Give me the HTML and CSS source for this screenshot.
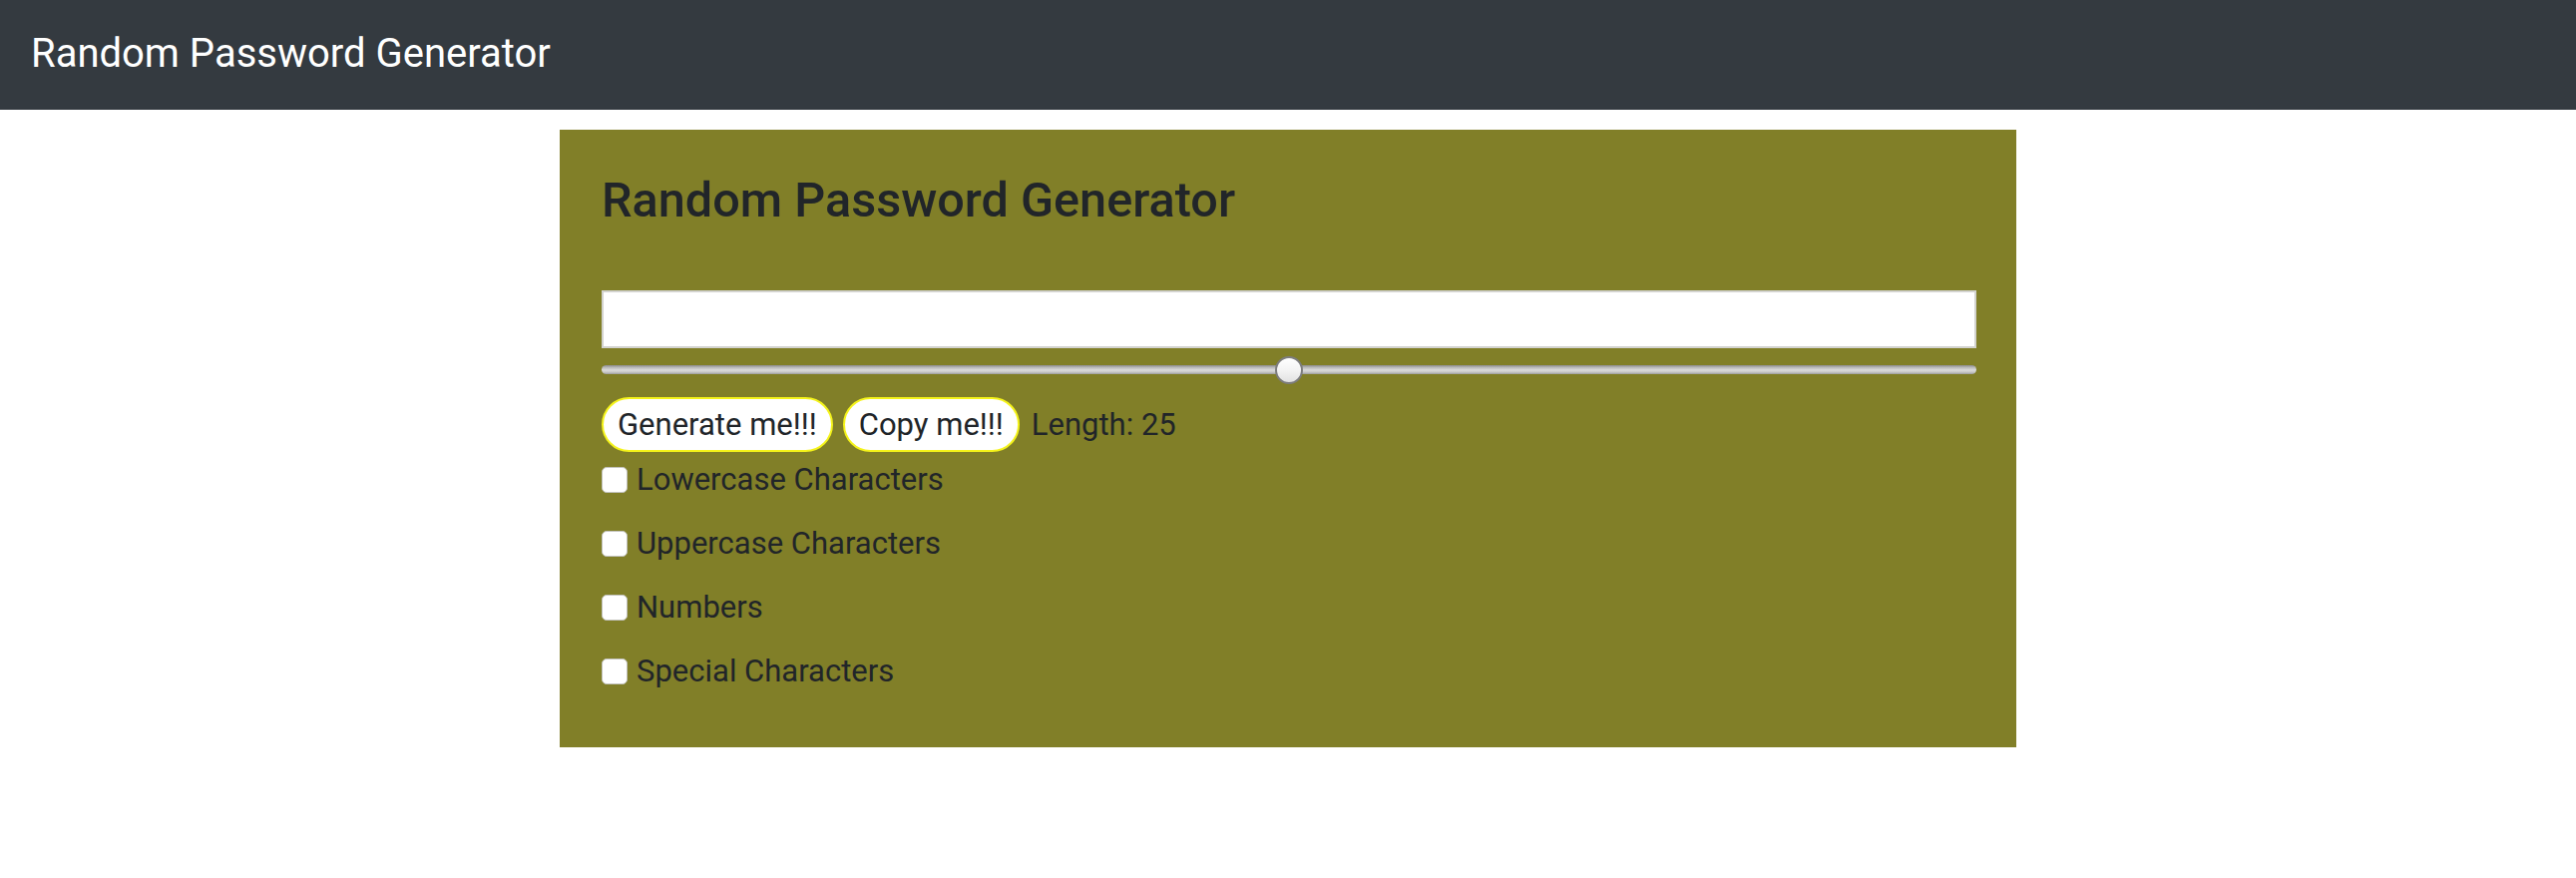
FILE: index.html
```html
<!DOCTYPE html>
<html lang="en">
<head>
<meta charset="utf-8">
<title>Random Password Generator</title>
<link rel="stylesheet" href="styles.css">
</head>
<body>
  <nav class="navbar">
    <span class="brand">Random Password Generator</span>
  </nav>
  <main class="card">
    <h4 class="card-title">Random Password Generator</h4>
    <input class="password" type="text" aria-label="Password">
    <input class="length-range" type="range" min="0" max="50" value="25" aria-label="Length">
    <div class="actions">
      <button class="pill" type="button">Generate me!!!</button>
      <button class="pill" type="button">Copy me!!!</button>
      <span class="length">Length: 25</span>
    </div>
    <div class="options">
      <label class="option"><input type="checkbox" class="check"><span>Lowercase Characters</span></label>
      <label class="option"><input type="checkbox" class="check"><span>Uppercase Characters</span></label>
      <label class="option"><input type="checkbox" class="check"><span>Numbers</span></label>
      <label class="option"><input type="checkbox" class="check"><span>Special Characters</span></label>
    </div>
  </main>
</body>
</html>
```
FILE: styles.css
```css
* { box-sizing: border-box; }

body {
  margin: 0;
  background: #ffffff;
  font-family: Roboto, "Liberation Sans", sans-serif;
  color: #212529;
}

.navbar {
  height: 110px;
  background: #343a40;
  display: flex;
  align-items: center;
  padding-left: 31px;
}

.brand {
  color: #ffffff;
  font-size: 40px;
  line-height: 1;
  padding-bottom: 3px;
}

.card {
  width: 1460px;
  margin: 20px auto 0;
  padding: 42px 40px 57px 42px;
  background: #817f28;
}

.card-title {
  margin: 0 0 61px;
  font-size: 48.6px;
  font-weight: 500;
  line-height: 57.6px;
  color: #212529;
}

.password {
  display: block;
  width: 100%;
  height: 58px;
  margin: 0;
  border: 2px solid #d3d3cf;
  background: #ffffff;
  font-size: 31px;
  font-family: inherit;
}

.length-range {
  display: block;
  width: 100%;
  height: 28px;
  margin: 8px 0 0;
  padding: 0;
  -webkit-appearance: none;
  appearance: none;
  background: transparent;
}

.length-range::-webkit-slider-runnable-track {
  height: 9px;
  border-radius: 5px;
  background: linear-gradient(#8a8a8a 0%, #b9b9b9 25%, #dcdcdc 55%, #c4c4c4 80%, #9c9c9c 100%);
}

.length-range::-webkit-slider-thumb {
  -webkit-appearance: none;
  width: 28px;
  height: 28px;
  margin-top: -9.5px;
  border-radius: 50%;
  border: 2px solid #7d7d7d;
  background: linear-gradient(#ffffff 0%, #f4f4f4 50%, #e2e2e2 100%);
}

.actions {
  display: flex;
  align-items: center;
  gap: 10px;
  margin-top: 13px;
}

.pill {
  height: 55px;
  padding: 0 14px;
  border: 2px solid #f4f31a;
  border-radius: 28px;
  background: #ffffff;
  color: #212529;
  font-family: inherit;
  font-size: 31px;
  line-height: 1;
}

.length {
  margin-left: 2px;
  font-size: 31px;
  line-height: 1;
}

.options {
  display: flex;
  flex-direction: column;
  gap: 26px;
  margin-top: 9px;
}

.option {
  display: flex;
  align-items: center;
  gap: 9px;
  height: 38px;
  font-size: 31px;
}

.check {
  -webkit-appearance: none;
  appearance: none;
  width: 26px;
  height: 26px;
  margin: 0;
  border: 1px solid #c2c2bc;
  border-radius: 5px;
  background: #ffffff;
}
```
